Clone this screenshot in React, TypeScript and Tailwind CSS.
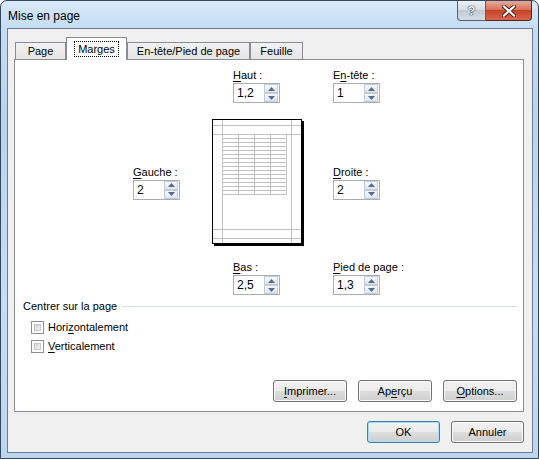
import React from "react";

// Small helper for the mnemonic underline
const U: React.FC<{ children: React.ReactNode }> = ({ children }) => (
  <span className="underline underline-offset-[2px]">{children}</span>
);

const Arrow: React.FC<{ up?: boolean }> = ({ up }) => (
  <svg width="7" height="4" viewBox="0 0 7 4">
    <path d={up ? "M3.5 0 L7 4 L0 4 Z" : "M0 0 L7 0 L3.5 4 Z"} fill="#4f6a9c" />
  </svg>
);

const Spin: React.FC<{ label: React.ReactNode; value: string }> = ({ label, value }) => (
  <div className="flex flex-col">
    <div className="h-[13px] leading-[13px] text-[11px] whitespace-nowrap">{label}</div>
    <div className="mt-[1px] w-[47px] h-[20px] border border-[#a9aeb6] bg-white flex items-stretch justify-between pl-[3px] pr-[1px]">
      <span className="text-[12px] leading-[18px]">{value}</span>
      <div className="flex flex-col w-[14px]">
        <div className="h-[9px] border border-[#c3ccd8] bg-[linear-gradient(to_bottom,#f7f9fb,#dfe5ec)] flex items-center justify-center">
          <Arrow up />
        </div>
        <div className="h-[9px] border border-[#c3ccd8] bg-[linear-gradient(to_bottom,#f7f9fb,#dfe5ec)] flex items-center justify-center">
          <Arrow />
        </div>
      </div>
    </div>
  </div>
);

const Check: React.FC<{ children: React.ReactNode }> = ({ children }) => (
  <div className="flex items-center h-[13px]">
    <div className="w-[13px] h-[13px] border border-[#8e8f8f] bg-white p-[2px]">
      <div className="w-full h-full bg-[linear-gradient(135deg,#cfd2d6,#f3f3f3)] border border-[#c6c8cb]" />
    </div>
    <span className="ml-[4px] text-[11px] leading-[13px]">{children}</span>
  </div>
);

const Btn: React.FC<{ children: React.ReactNode; def?: boolean; wide?: boolean }> = ({ children, def, wide }) => (
  <div
    className={
      (wide ? "w-[74px] " : "w-[73px] ") +
      (def
        ? "h-[22px] rounded-[3px] border border-[#3c7fb1] bg-[linear-gradient(to_bottom,#f2f2f2_0%,#ebebeb_50%,#dddddd_50%,#cfcfcf_100%)] shadow-[inset_0_0_0_1px_#a6dcf6] flex items-center justify-center text-[11px]"
        : "h-[22px] rounded-[3px] border border-[#707070] bg-[linear-gradient(to_bottom,#f2f2f2_0%,#ebebeb_50%,#dddddd_50%,#cfcfcf_100%)] shadow-[inset_0_0_0_1px_#fbfbfb] flex items-center justify-center text-[11px]")
    }
  >
    {children}
  </div>
);

const Preview: React.FC = () => {
  const rows = Array.from({ length: 16 }, (_, i) => 15.5 + i * 4);
  const cols = [10.5, 26.5, 42.5, 58.5, 74.5];
  return (
    <svg width="92" height="127" viewBox="0 0 92 127">
      <rect x="2" y="2" width="90" height="125" fill="#000" />
      <rect x="0.5" y="0.5" width="89" height="124" fill="#fff" stroke="#000" />
      <g stroke="#c0c0c0" strokeWidth="1">
        <line x1="10.5" y1="1" x2="10.5" y2="124" />
        <line x1="79.5" y1="1" x2="79.5" y2="124" />
        <line x1="1" y1="6.5" x2="89" y2="6.5" />
        <line x1="1" y1="15.5" x2="89" y2="15.5" />
        <line x1="1" y1="110.5" x2="89" y2="110.5" />
        <line x1="1" y1="119.5" x2="89" y2="119.5" />
        {rows.map((y) => (
          <line key={y} x1="10.5" y1={y} x2="74.5" y2={y} />
        ))}
        {cols.map((x) => (
          <line key={x} x1={x} y1="15.5" x2={x} y2="75.5" />
        ))}
      </g>
    </svg>
  );
};

const App: React.FC = () => {
  return (
    <div className="w-[539px] h-[459px] flex flex-col rounded-t-[7px] border border-[#34475d] bg-[linear-gradient(to_bottom,#d8e9f9_0px,#c4dcf3_28px,#b7d4ef_120px,#c6def4_300px,#bcd6ef_459px)] pl-[6px] pr-[5px] pb-[5px] text-black font-['Liberation_Sans',Arial,sans-serif]">
      {/* Title bar */}
      <div className="h-[27px] flex justify-between items-start">
        <span className="pl-[1px] pt-[8px] text-[12px] leading-[14px]">Mise en page</span>
        <div className="flex mr-[1px]">
          <div className="w-[29px] h-[20px] rounded-bl-[4px] border border-[#56606c] border-t-0 bg-[linear-gradient(to_bottom,#eef1f5,#d5dbe3_50%,#c2cad4_50%,#d6dde6)] flex items-center justify-center">
            <span className="text-[13px] font-bold leading-none text-white [text-shadow:0_0_1px_#26364a,0_0_1px_#26364a,0_0_1px_#26364a]">?</span>
          </div>
          <div className="w-[46px] h-[20px] rounded-br-[4px] border border-[#5a2318] border-t-0 border-l-0 bg-[linear-gradient(to_bottom,#eaa995,#d6745c_45%,#c6432a_50%,#d7664a)] flex items-center justify-center">
            <svg width="14" height="12" viewBox="0 0 14 12">
              <path d="M2 1.5 L12 10.5 M12 1.5 L2 10.5" stroke="#3e1a12" strokeWidth="4" strokeLinecap="square" />
              <path d="M2 1.5 L12 10.5 M12 1.5 L2 10.5" stroke="#fff" strokeWidth="2.2" strokeLinecap="square" />
            </svg>
          </div>
        </div>
      </div>

      {/* Client area */}
      <div className="flex-1 flex flex-col border border-[#6b7d92] bg-[#f0f0f0] text-[11px]">
        {/* Tabs */}
        <div className="mt-[8px] ml-[7px] h-[22px] flex items-end">
          <div className="w-[51px] h-[17px] border border-b-0 border-[#898c95] bg-[linear-gradient(to_bottom,#f3f3f3,#e5e5e5)] flex items-center justify-center">
            Page
          </div>
          <div className="w-[61px] h-[23px] -mb-px relative z-10 border border-b-0 border-[#898c95] bg-white flex items-center justify-center">
            <span className="px-[3px] leading-[14px] outline outline-1 outline-dotted outline-black">Marges</span>
          </div>
          <div className="w-[123px] h-[17px] border border-b-0 border-[#898c95] bg-[linear-gradient(to_bottom,#f3f3f3,#e5e5e5)] flex items-center justify-center">
            En-tête/Pied de page
          </div>
          <div className="w-[53px] h-[17px] border border-b-0 border-[#898c95] bg-[linear-gradient(to_bottom,#f3f3f3,#e5e5e5)] flex items-center justify-center">
            Feuille
          </div>
        </div>

        {/* Panel */}
        <div className="ml-[6px] w-[510px] h-[353px] border border-[#898c95] bg-white flex flex-col">
          <div className="mt-[9px] ml-[218px] flex">
            <div className="w-[100px]">
              <Spin label={<><U>H</U>aut :</>} value="1,2" />
            </div>
            <Spin label={<>E<U>n</U>-tête :</>} value="1" />
          </div>

          <div className="mt-[16px] ml-[118px] flex items-center">
            <div className="w-[79px]">
              <Spin label={<><U>G</U>auche :</>} value="2" />
            </div>
            <Preview />
            <div className="ml-[29px]">
              <Spin label={<><U>D</U>roite :</>} value="2" />
            </div>
          </div>

          <div className="mt-[15px] ml-[218px] flex">
            <div className="w-[100px]">
              <Spin label={<><U>B</U>as :</>} value="2,5" />
            </div>
            <Spin label={<><U>P</U>ied de page :</>} value="1,3" />
          </div>

          <div className="mt-[5px] ml-[8px] mr-[6px] flex items-center h-[13px]">
            <span className="leading-[13px] whitespace-nowrap">Centrer sur la page</span>
            <div className="ml-[5px] flex-1 h-px bg-[#d5dfe5]" />
          </div>

          <div className="mt-[8px] ml-[16px] flex flex-col gap-[6px]">
            <Check>Hori<U>z</U>ontalement</Check>
            <Check><U>V</U>erticalement</Check>
          </div>

          <div className="mt-[27px] mr-[6px] flex justify-end gap-[11px]">
            <Btn wide><U>I</U>mprimer...</Btn>
            <Btn wide>Ap<U>e</U>rçu</Btn>
            <Btn wide><U>O</U>ptions...</Btn>
          </div>
        </div>

        {/* Dialog buttons */}
        <div className="mt-[9px] mr-[8px] flex justify-end gap-[11px]">
          <Btn def>OK</Btn>
          <Btn>Annuler</Btn>
        </div>
      </div>
    </div>
  );
};

export default App;
